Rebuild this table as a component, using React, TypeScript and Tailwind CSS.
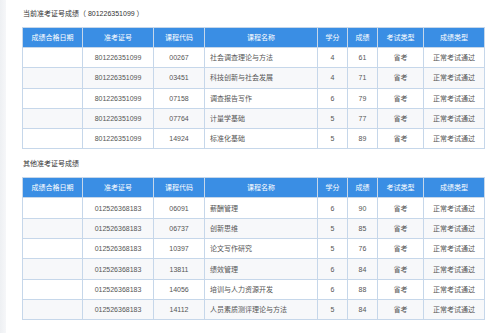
const cols = [
  { label: "成绩合格日期", w: "w-[60px]" },
  { label: "准考证号", w: "w-[71px]" },
  { label: "课程代码", w: "w-[51px]" },
  { label: "课程名称", w: "w-[113px]" },
  { label: "学分", w: "w-[30px]" },
  { label: "成绩", w: "w-[30px]" },
  { label: "考试类型", w: "w-[46px]" },
  { label: "成绩类型", w: "w-[61px]" },
];

type Row = [string, string, string, string, string];

const current: Row[] = [
  ["801226351099", "00267", "社会调查理论与方法", "4", "61"],
  ["801226351099", "03451", "科技创新与社会发展", "4", "71"],
  ["801226351099", "07158", "调查报告写作", "6", "79"],
  ["801226351099", "07764", "计量学基础", "5", "77"],
  ["801226351099", "14924", "标准化基础", "5", "89"],
];

const other: Row[] = [
  ["012526368183", "06091", "薪酬管理", "6", "90"],
  ["012526368183", "06737", "创新思维", "5", "85"],
  ["012526368183", "10397", "论文写作研究", "5", "76"],
  ["012526368183", "13811", "绩效管理", "6", "84"],
  ["012526368183", "14056", "培训与人力资源开发", "6", "88"],
  ["012526368183", "14112", "人员素质测评理论与方法", "5", "84"],
];

function ScoreTable({ rows }: { rows: Row[] }) {
  return (
    <table className="w-[462px] table-fixed border-collapse text-[7px] leading-none">
      <thead>
        <tr className="h-[20px] bg-[#3a8ee4] text-white">
          {cols.map((c) => (
            <th key={c.label} className={`${c.w} border border-[#c6d7ea] font-normal`}>
              {c.label}
            </th>
          ))}
        </tr>
      </thead>
      <tbody className="text-[#555]">
        {rows.map((r, i) => (
          <tr key={i} className={`h-[20.3px] ${i % 2 === 1 ? "bg-[#f7f8fa]" : "bg-white"}`}>
            <td className="border border-[#c6d7ea]" />
            <td className="border border-[#c6d7ea] text-center">{r[0]}</td>
            <td className="border border-[#c6d7ea] text-center">{r[1]}</td>
            <td className="border border-[#c6d7ea] pl-[5px] text-left">{r[2]}</td>
            <td className="border border-[#c6d7ea] text-center">{r[3]}</td>
            <td className="border border-[#c6d7ea] text-center">{r[4]}</td>
            <td className="border border-[#c6d7ea] text-center">省考</td>
            <td className="border border-[#c6d7ea] text-center">正常考试通过</td>
          </tr>
        ))}
      </tbody>
    </table>
  );
}

export default function App() {
  return (
    <div
      className="flex h-[333px] w-[489px] bg-white"
      style={{ fontFamily: '"Liberation Sans", "Noto Sans CJK SC", sans-serif' }}
    >
      <div className="w-[6px] shrink-0 bg-gradient-to-r from-[#eef0f3] to-[#f6f7f9]" />
      <div className="flex flex-col pl-[16px]">
        <div className="mt-[10px] h-[8px] pl-[1px] text-[7px] leading-[8px] text-[#333]">
          当前准考证号成绩（ 801226351099 ）
        </div>
        <div className="mt-[9px]">
          <ScoreTable rows={current} />
        </div>
        <div className="mt-[11px] h-[8px] pl-[1px] text-[7px] leading-[8px] text-[#333]">
          其他准考证号成绩
        </div>
        <div className="mt-[9px]">
          <ScoreTable rows={other} />
        </div>
      </div>
    </div>
  );
}
